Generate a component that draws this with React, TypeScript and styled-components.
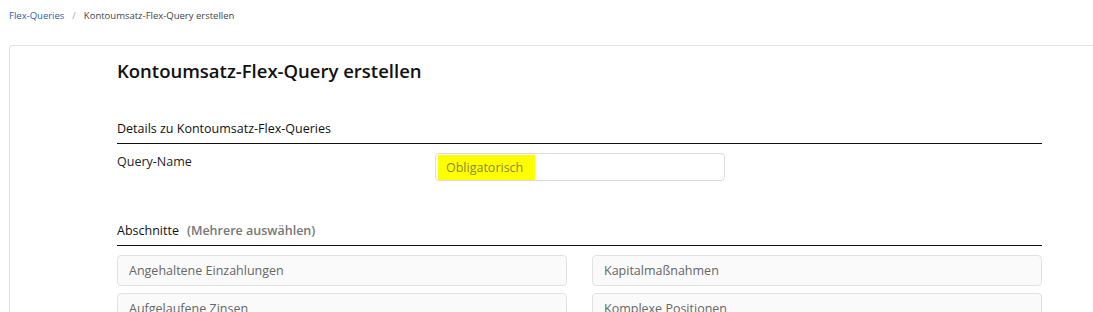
import React from 'react';
import styled, { createGlobalStyle } from 'styled-components';

const Global = createGlobalStyle`
  body {
    margin: 0;
    background: #fff;
    font-family: 'Open Sans', 'Liberation Sans', sans-serif;
    color: #222;
  }
`;

const Page = styled.div`
  padding: 8px 0 0 9px;
  overflow: hidden;
  height: 312px;
`;

const Crumbs = styled.nav`
  display: flex;
  align-items: center;
  gap: 8px;
  font-size: 9.5px;
  height: 14px;
  margin-bottom: 23px;
  color: #444;
`;

const CrumbLink = styled.a`
  color: #2a5db0;
  text-decoration: none;
`;

const Sep = styled.span`
  color: #aaa;
`;

const Card = styled.div`
  border: 1px solid #e3e3e3;
  border-right: none;
  border-radius: 4px 0 0 0;
  margin-right: -20px;
  padding: 11px 0 0 107px;
  min-height: 300px;
`;

const Inner = styled.div`
  width: 925px;
`;

const Title = styled.h1`
  margin: 0 0 35px;
  font-size: 18.5px;
  font-weight: 600;
  color: #111;
  line-height: 28px;
`;

const SectionHead = styled.div`
  display: flex;
  align-items: baseline;
  gap: 8px;
  font-size: 12.5px;
  font-weight: 500;
  color: #111;
  padding-bottom: 6px;
  border-bottom: 1.5px solid #111;
`;

const Hint = styled.span`
  color: #777;
  font-weight: 600;
`;

const FieldRow = styled.div`
  display: grid;
  grid-template-columns: 318px 290px;
  padding-top: 9px;
  margin-bottom: 41px;
`;

const Label = styled.label`
  font-size: 12.5px;
  color: #222;
`;

const InputBox = styled.div`
  height: 28px;
  border: 1px solid #dcdcdc;
  border-radius: 4px;
  box-sizing: border-box;
  display: flex;
  align-items: center;
  padding-left: 2px;
`;

const Mark = styled.span`
  background: #ffff00;
  color: #8a8a3a;
  font-size: 12.5px;
  height: 25px;
  line-height: 25px;
  padding: 0 12px 0 8px;
`;

const Options = styled.div`
  display: grid;
  grid-template-columns: 450px 450px;
  column-gap: 25px;
  row-gap: 7px;
  padding-top: 9px;
`;

const Option = styled.div`
  height: 31px;
  box-sizing: border-box;
  border: 1px solid #e2e2e2;
  border-radius: 4px;
  background: #fafafa;
  display: flex;
  align-items: center;
  padding-left: 11px;
  font-size: 12.5px;
  color: #666;
`;

const sections = [
  'Angehaltene Einzahlungen',
  'Kapitalmaßnahmen',
  'Aufgelaufene Zinsen',
  'Komplexe Positionen',
];

export default function App() {
  return (
    <Page>
      <Global />
      <Crumbs>
        <CrumbLink href="#">Flex-Queries</CrumbLink>
        <Sep>/</Sep>
        <span>Kontoumsatz-Flex-Query erstellen</span>
      </Crumbs>
      <Card>
        <Inner>
          <Title>Kontoumsatz-Flex-Query erstellen</Title>
          <SectionHead>Details zu Kontoumsatz-Flex-Queries</SectionHead>
          <FieldRow>
            <Label>Query-Name</Label>
            <InputBox>
              <Mark>Obligatorisch</Mark>
            </InputBox>
          </FieldRow>
          <SectionHead>
            Abschnitte <Hint>(Mehrere auswählen)</Hint>
          </SectionHead>
          <Options>
            {sections.map((s) => (
              <Option key={s}>{s}</Option>
            ))}
          </Options>
        </Inner>
      </Card>
    </Page>
  );
}
